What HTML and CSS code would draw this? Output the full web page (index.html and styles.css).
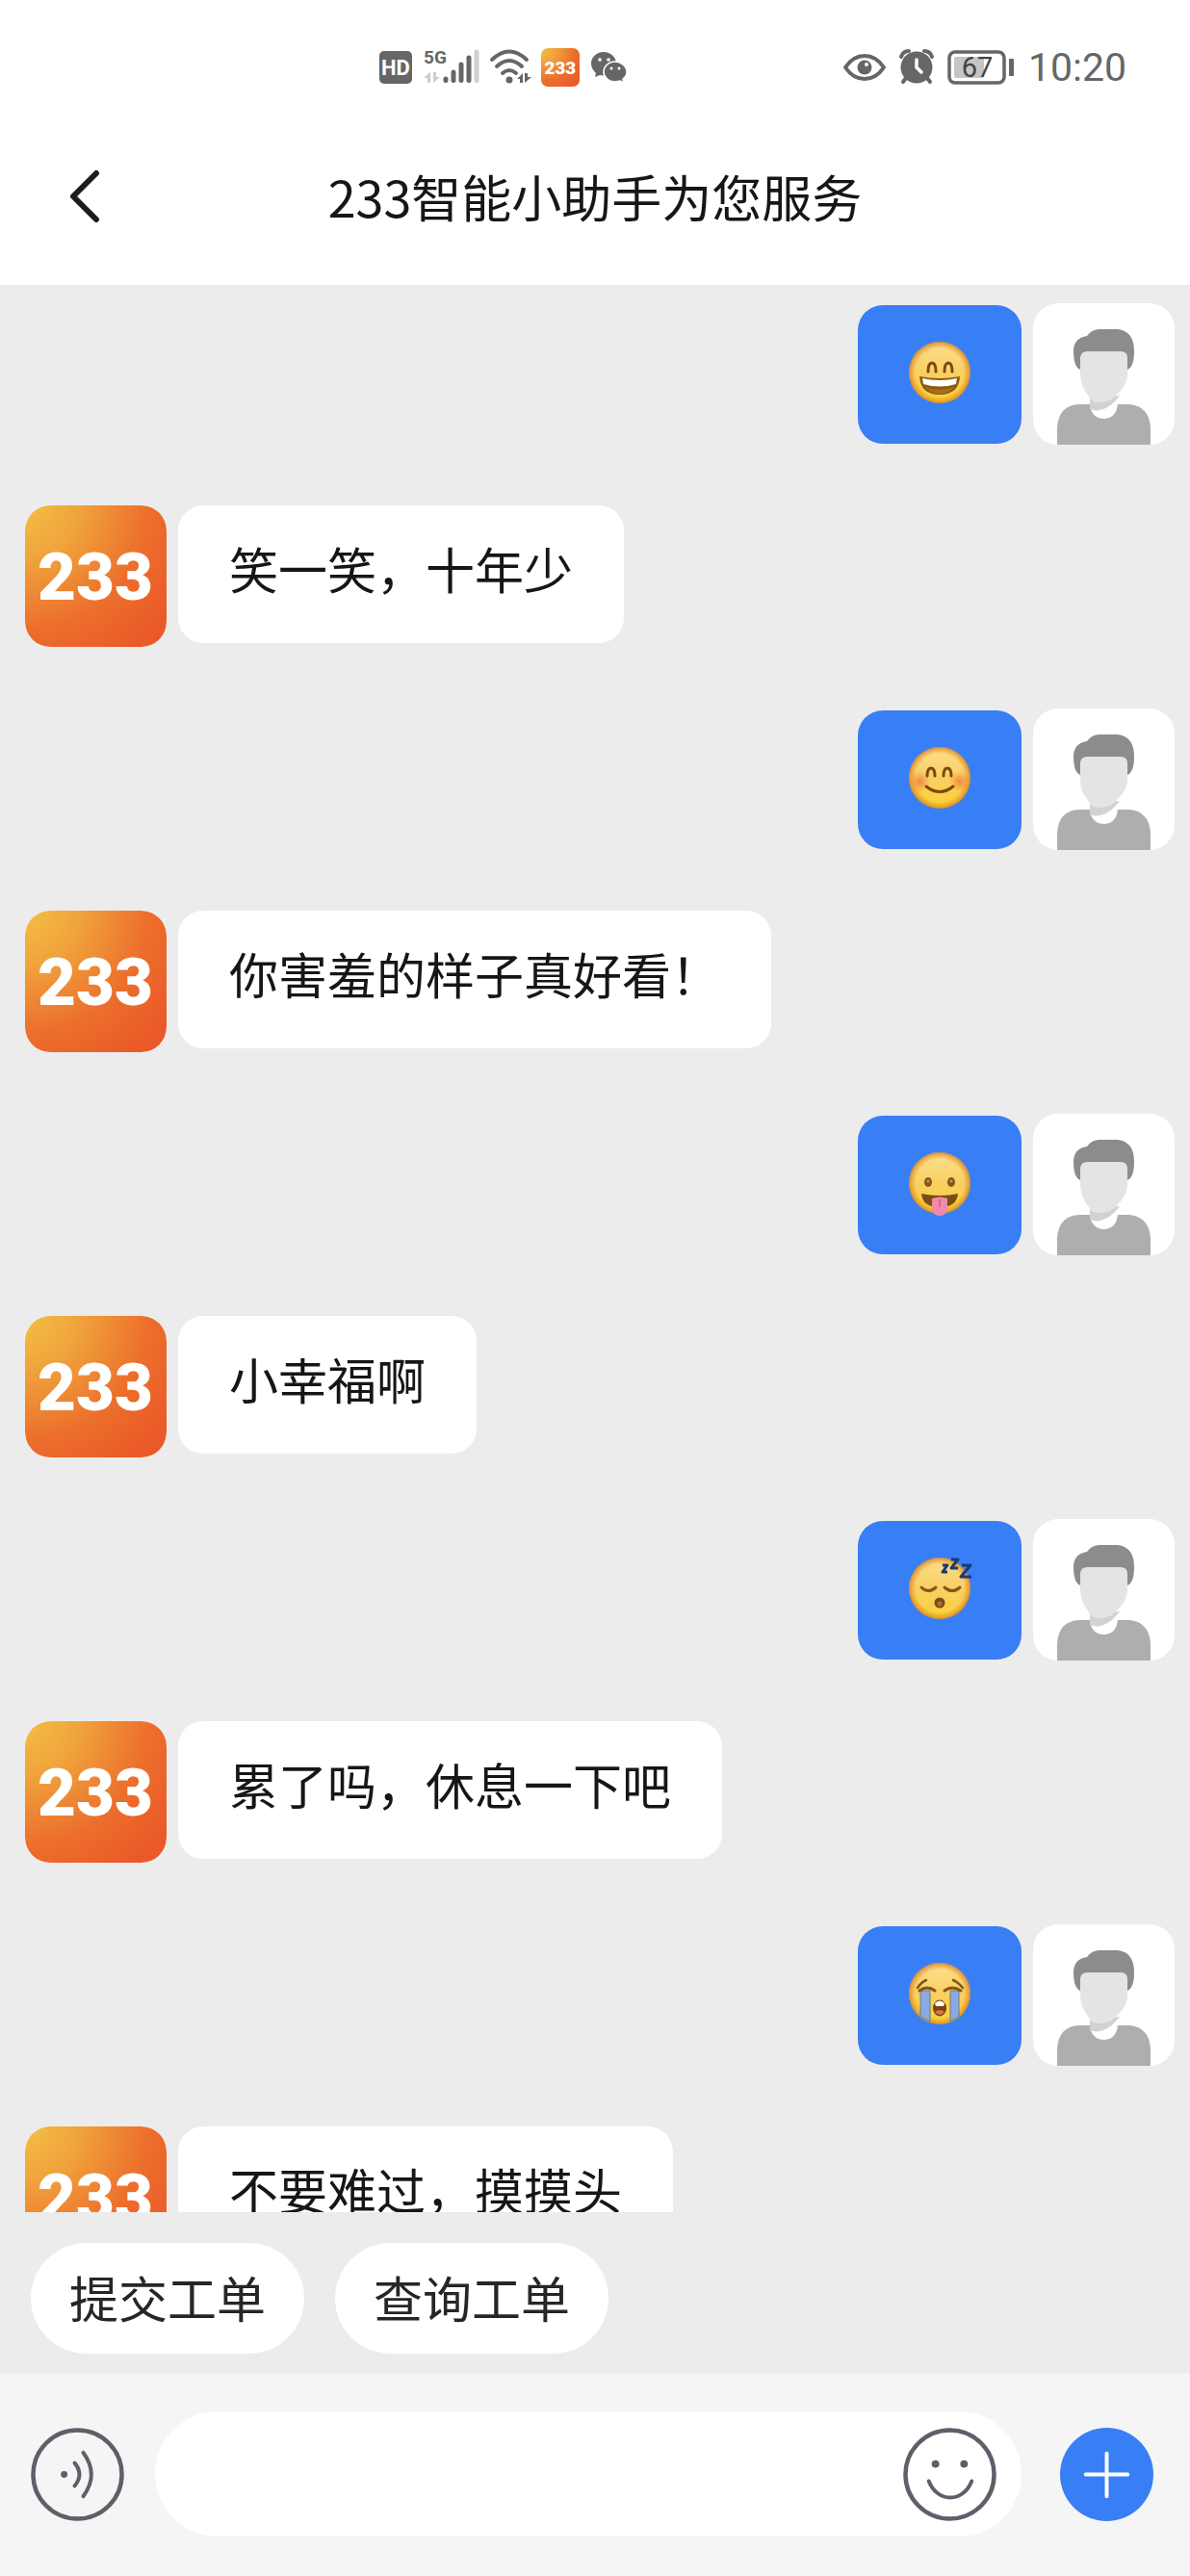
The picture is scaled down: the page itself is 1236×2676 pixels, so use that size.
FILE: index.html
```html
<!DOCTYPE html>
<html lang="zh-CN">
<head>
<meta charset="utf-8">
<meta name="viewport" content="width=device-width, initial-scale=1">
<title>233智能小助手为您服务</title>
<link rel="stylesheet" href="styles.css">
</head>
<body>
<svg class="sprite" aria-hidden="true">
  <defs>
    <radialGradient id="brand" cx="0" cy="0" r="1.25">
      <stop offset="0" stop-color="#f5bf44"/>
      <stop offset=".3" stop-color="#f0a43c"/>
      <stop offset=".7" stop-color="#ec6e2c"/>
      <stop offset="1" stop-color="#ea5a28"/>
    </radialGradient>
    <linearGradient id="skin" x1="0" y1="0" x2="0" y2="1">
      <stop offset="0" stop-color="#fbdf8e"/>
      <stop offset=".5" stop-color="#f9cf63"/>
      <stop offset="1" stop-color="#f8d335"/>
    </linearGradient>
    <radialGradient id="rim">
      <stop offset=".78" stop-color="#e88a1c" stop-opacity="0"/>
      <stop offset=".96" stop-color="#e08a28" stop-opacity=".75"/>
      <stop offset="1" stop-color="#a07848"/>
    </radialGradient>
    <radialGradient id="blush">
      <stop offset="0" stop-color="#f0723a" stop-opacity=".75"/>
      <stop offset="1" stop-color="#f0723a" stop-opacity="0"/>
    </radialGradient>
    <symbol id="logo" viewBox="0 0 147 147">
      <rect width="147" height="147" rx="26" fill="url(#brand)"/>
      <text class="logo-text" x="73" y="98" text-anchor="middle">233</text>
    </symbol>
    <symbol id="person" viewBox="0 0 147 147">
      <path d="M25 147V130Q26 106 48 105H100Q121 107 122 130V147Z" fill="#aeaeae"/>
      <path d="M59 104V107Q62 120 74 120Q87 119 88 104Z" fill="#fff"/>
      <path d="M59 98V110Q72 115 85 102L90 96Z" fill="#d2d2d2"/>
      <path d="M49 69Q42 66 42 50Q42 36 56 34Q61 27 69 27H88Q105 29 105 50Q105 66 98 69Z" fill="#8c8c8c"/>
      <path d="M49 56Q50 50 56 50H91Q98 50 98 57V75Q98 85 85 97Q79 103 68 103Q61 103 58 97Q49 86 49 74Z" fill="#e4e4e4"/>
    </symbol>
    <symbol id="face" viewBox="0 0 64 64">
      <circle cx="32" cy="32" r="32" fill="url(#skin)"/>
      <circle cx="32" cy="32" r="32" fill="url(#rim)"/>
    </symbol>
  </defs>
</svg>

<div class="app">
  <div class="status">
    <div class="status-group">
      <svg class="ico" width="34" height="40" viewBox="0 0 34 40"><rect y="3" width="34" height="34" rx="5" fill="#666"/><text class="hd" x="17" y="28" text-anchor="middle">HD</text></svg>
      <svg class="ico signal" width="58" height="40" viewBox="0 0 58 40">
        <text class="net" x="0" y="16">5G</text>
        <path d="M7 25V36H4V31H0ZM10 25V36L17 30H13V25Z" fill="#ccc"/>
        <g stroke="#666" stroke-width="5" stroke-linecap="round"><path d="M23 32V33.500M31 25V33.500M39 17V33.500M47 10V33.500"/><path d="M55 4V33.500" stroke="#d0d0d0"/></g>
      </svg>
      <svg class="ico wifi" width="44" height="40" viewBox="0 0 44 40">
        <g fill="none" stroke="#666" stroke-width="4" stroke-linecap="round"><path d="M3 12Q21-5 39 12M8 19Q21 7 34 19M14 26Q21 20 28 26"/></g>
        <circle cx="21" cy="33" r="3.500" fill="#666"/><path d="M35 26V36H32V32H29ZM37 26V36L44 30H40V26Z" fill="#666"/>
      </svg>
      <svg class="ico tile" width="40" height="40"><use href="#logo"/></svg>
      <svg class="ico" width="37" height="40" viewBox="0 0 37 40">
        <path d="M13 4C5 4 0 10 0 16C0 20 2 23 5 26L4 30L9 28C20 30 26 24 26 16C26 9 20 4 13 4Z" fill="#666"/>
        <path d="M25 14C18 14 13 19 13 24.500C13 30 18 35 25 35L30 34L34 36L33 32C36 30 37 27 37 24.500C37 19 31 14 25 14Z" fill="#666" stroke="#fff" stroke-width="1.500"/>
        <g fill="#fff"><circle cx="9" cy="12" r="1.800"/><circle cx="18" cy="12" r="1.800"/><circle cx="21" cy="21" r="1.500"/><circle cx="29" cy="21" r="1.500"/></g>
      </svg>
    </div>
    <div class="status-group status-right">
      <svg class="ico" width="44" height="40" viewBox="0 0 44 40"><path d="M2 20Q10 8 22 8T42 20Q34 32 22 32T2 20Z" fill="none" stroke="#666" stroke-width="4" stroke-linejoin="round"/><circle cx="22" cy="20" r="7.500" fill="#666"/><circle cx="24" cy="17" r="2" fill="#fff"/></svg>
      <svg class="ico" width="36" height="40" viewBox="0 0 36 40"><circle cx="18" cy="20" r="16.500" fill="#666"/><path d="M2 9Q4 3 10 3M26 3Q32 3 34 9" stroke="#666" stroke-width="4" fill="none" stroke-linecap="round"/><path d="M7 31L4 35M29 31L32 35" stroke="#666" stroke-width="4" stroke-linecap="round"/><path d="M18 12V20L23 25" stroke="#fff" stroke-width="3.500" fill="none" stroke-linecap="round"/></svg>
      <svg class="ico" width="70" height="40" viewBox="0 0 70 40"><rect x="2" y="4" width="57" height="32" rx="6" fill="none" stroke="#666" stroke-width="3.500"/><rect x="7" y="9" width="31" height="22" rx="2" fill="#c5c5c5"/><rect x="64" y="11" width="5" height="18" rx="1" fill="#666"/><text class="pct" x="31" y="30" text-anchor="middle">67</text></svg>
      <time class="clock">10:20</time>
    </div>
  </div>

  <header class="bar">
    <button class="back" type="button" aria-label="返回"><svg width="34" height="56" viewBox="0 0 34 56"><path d="M30 4L6 28L30 52" fill="none" stroke="#1c1c1c" stroke-width="6" stroke-linecap="round" stroke-linejoin="round"/></svg></button>
    <h1 class="title">233智能小助手为您服务</h1>
  </header>

  <main class="chat">
    <div class="row row-user">
      <div class="bubble bubble-user"><svg class="emoji" viewBox="0 0 64 64" role="img" aria-label="大笑"><use href="#face"/>
        <path d="M20 31Q20 22 24 22T28 31M37 31Q37 22 41 22T45 31" fill="none" stroke="#7a4a0c" stroke-width="3" stroke-linecap="round"/>
        <path d="M11 36Q32 40 53 36Q52 55 32 55T11 36Z" fill="#8a5a12"/><path d="M14 38Q32 42 50 38L49 44Q32 49 15 44Z" fill="#fff"/><path d="M17 47Q32 52 47 47Q42 54 32 54T17 47Z" fill="#a96e18"/></svg></div>
      <svg class="avatar user"><use href="#person"/></svg>
    </div>
    <div class="row row-bot">
      <svg class="avatar"><use href="#logo"/></svg>
      <p class="bubble">笑一笑，十年少</p>
    </div>
    <div class="row row-user">
      <div class="bubble bubble-user"><svg class="emoji" viewBox="0 0 64 64" role="img" aria-label="害羞"><use href="#face"/>
        <circle cx="11" cy="36" r="11" fill="url(#blush)"/><circle cx="53" cy="36" r="11" fill="url(#blush)"/>
        <path d="M19 30Q19 22 23 22T27 30M36 30Q36 22 40 22T44 30" fill="none" stroke="#7a4a0c" stroke-width="3" stroke-linecap="round"/>
        <path d="M18 41Q32 52 46 41" fill="none" stroke="#7a4a0c" stroke-width="3" stroke-linecap="round"/></svg></div>
      <svg class="avatar user"><use href="#person"/></svg>
    </div>
    <div class="row row-bot">
      <svg class="avatar"><use href="#logo"/></svg>
      <p class="bubble">你害羞的样子真好看！</p>
    </div>
    <div class="row row-user">
      <div class="bubble bubble-user"><svg class="emoji" viewBox="0 0 64 64" role="img" aria-label="吐舌"><use href="#face"/>
        <g fill="#855718"><ellipse cx="20" cy="31" rx="4" ry="5"/><ellipse cx="44" cy="31" rx="4" ry="5"/></g><g fill="#c49a50"><circle cx="20" cy="30" r="1.500"/><circle cx="44" cy="30" r="1.500"/></g>
        <path d="M13 43Q32 47 51 43Q50 57 32 57T13 43Z" fill="#7a4d10"/><path d="M24 48Q32 45 40 48V58Q39 66 32 66T24 58Z" fill="#f08aac"/><path d="M32 49V57" stroke="#d96a90" stroke-width="2"/></svg></div>
      <svg class="avatar user"><use href="#person"/></svg>
    </div>
    <div class="row row-bot">
      <svg class="avatar"><use href="#logo"/></svg>
      <p class="bubble">小幸福啊</p>
    </div>
    <div class="row row-user">
      <div class="bubble bubble-user"><svg class="emoji" viewBox="0 0 64 64" role="img" aria-label="睡觉"><use href="#face"/>
        <path d="M13 31Q20 38 28 31M37 31Q45 38 53 31" fill="none" stroke="#855718" stroke-width="3" stroke-linecap="round"/>
        <circle cx="32" cy="47" r="5.500" fill="#7a4a14"/><circle cx="32" cy="48" r="2.500" fill="#a97438"/>
        <path d="M35 8H40L35 15H40M44 2H51L44 11H51M55 8H64L54 20H65" fill="none" stroke="#1c3a72" stroke-width="3" stroke-linejoin="round"/></svg></div>
      <svg class="avatar user"><use href="#person"/></svg>
    </div>
    <div class="row row-bot">
      <svg class="avatar"><use href="#logo"/></svg>
      <p class="bubble">累了吗，休息一下吧</p>
    </div>
    <div class="row row-user">
      <div class="bubble bubble-user"><svg class="emoji" viewBox="0 0 64 64" role="img" aria-label="大哭"><use href="#face"/>
        <path d="M12 29H22V61L12 56ZM43 29H52V56L43 61Z" fill="#8aa9e6" stroke="#6c8068" stroke-width="1"/>
        <path d="M9 26Q13 20 18 18M46 18Q51 20 56 26" fill="none" stroke="#855718" stroke-width="2.500" stroke-linecap="round"/>
        <path d="M11 29Q19 23 27 29M37 29Q45 23 54 29" fill="none" stroke="#855718" stroke-width="3" stroke-linecap="round"/>
        <ellipse cx="32" cy="47" rx="7" ry="8.500" fill="#7a430f"/><path d="M27 42Q32 37 37 42L36 45H28Z" fill="#fff"/><path d="M27 51Q32 47 37 51Q32 57 27 51Z" fill="#d8794a"/></svg></div>
      <svg class="avatar user"><use href="#person"/></svg>
    </div>
    <div class="row row-bot">
      <svg class="avatar"><use href="#logo"/></svg>
      <p class="bubble">不要难过，摸摸头</p>
    </div>
  </main>

  <nav class="quick">
    <button class="pill" type="button">提交工单</button>
    <button class="pill" type="button">查询工单</button>
  </nav>

  <footer class="composer">
    <button class="round" type="button" aria-label="语音输入"><svg viewBox="0 0 98 98"><g fill="none" stroke="#5f5e69"><circle cx="49" cy="49" r="46.500" stroke-width="4.500"/><path d="M46 37Q56 49 46 61M55 26Q72 49 55 72" stroke-width="4" stroke-linecap="round"/></g><circle cx="35" cy="49" r="3.500" fill="#5f5e69"/></svg></button>
    <div class="field">
      <input class="input" type="text" aria-label="输入消息">
      <button class="round" type="button" aria-label="表情"><svg viewBox="0 0 98 98"><g fill="none" stroke="#5f5e69"><circle cx="49" cy="49" r="46.500" stroke-width="4.500"/><path d="M27 56C36 79 63 79 72 56" stroke-width="4" stroke-linecap="round"/></g><circle cx="34" cy="38" r="4" fill="#5f5e69"/><circle cx="64" cy="38" r="4" fill="#5f5e69"/></svg></button>
    </div>
    <button class="round" type="button" aria-label="更多"><svg viewBox="0 0 98 98"><circle cx="49" cy="49" r="49" fill="#387ef5"/><path d="M49 27V72M27 49H71" stroke="#fff" stroke-width="4" stroke-linecap="round"/></svg></button>
  </footer>
</div>
</body>
</html>
```
FILE: styles.css
```css
* { box-sizing: border-box; }

body {
  margin: 0;
  background: #ececec;
  color: #161616;
  font-family: "Noto Sans CJK SC", sans-serif;
}

button {
  border: 0;
  padding: 0;
  background: none;
  color: inherit;
  font: inherit;
  cursor: pointer;
}

svg { display: block; }
.sprite { position: absolute; width: 0; height: 0; }

.app {
  display: flex;
  flex-direction: column;
  height: 100vh;
}

/* Status bar */
.status {
  display: flex;
  justify-content: space-between;
  align-items: center;
  flex: none;
  padding: 46px 66px 22px 394px;
  background: #fff;
  color: #666;
}
.status-group {
  display: flex;
  align-items: center;
  gap: 12px;
  height: 48px;
}
.status-right { gap: 14px; }
.ico { flex: none; overflow: visible; }
.wifi { margin: 0 -2px; }
.hd { font: 700 22px Roboto, sans-serif; fill: #fff; }
.net { font: 700 19px Roboto, sans-serif; fill: #666; }
.pct { font: 400 29px Roboto, sans-serif; fill: #444; }
.clock { font: 400 41px/48px Roboto, sans-serif; }

/* Title bar */
.bar {
  display: grid;
  grid-template-columns: 1fr auto 1fr;
  align-items: center;
  flex: none;
  height: 180px;
  padding: 0 70px 4px;
  background: #fff;
}
.back { justify-self: start; }
.title {
  margin: 0;
  font-size: 52px;
  font-weight: 400;
  line-height: 72px;
}

/* Messages */
.chat {
  flex: 1;
  min-height: 0;
  overflow: hidden;
  padding: 19px 16px 0 26px;
}
.row {
  display: flex;
  gap: 12px;
}
.row-user {
  justify-content: flex-end;
  align-items: center;
  margin-bottom: 63px;
}
.row-bot {
  align-items: flex-start;
  margin-bottom: 64px;
}
.avatar {
  flex: none;
  width: 147px;
  height: 147px;
  border-radius: 26px;
}
.user { background: #fff; }
.logo-text { font: 900 69px Roboto, sans-serif; fill: #fff; }
.bubble {
  margin: 0;
  padding: 29px 53px 42px;
  border-radius: 26px;
  background: #fff;
  font-size: 51px;
  line-height: 72px;
}
.bubble-user {
  padding: 38px 53px 42px;
  background: #387ef5;
}
.emoji {
  width: 64px;
  height: 64px;
  overflow: visible;
}

/* Shortcut buttons */
.quick {
  display: flex;
  flex: none;
  gap: 32px;
  padding: 32px 32px 20px;
}
.pill {
  padding: 20px 40px 23px;
  border-radius: 58px;
  background: #fff;
  color: #262626;
  font-size: 51px;
  line-height: 72px;
}

/* Composer */
.composer {
  display: flex;
  align-items: center;
  flex: none;
  padding: 40px 38px 41px 32px;
  background: #f5f5f5;
}
.round {
  flex: none;
  width: 97px;
  height: 97px;
  border-radius: 50%;
}
.field {
  display: flex;
  align-items: center;
  flex: 1;
  height: 130px;
  margin: 0 40px 0 32px;
  padding: 0 26px 0 60px;
  border-radius: 65px;
  background: #fff;
}
.input {
  flex: 1;
  min-width: 0;
  height: 72px;
  border: 0;
  outline: 0;
  background: transparent;
  font: inherit;
  font-size: 51px;
}
```
